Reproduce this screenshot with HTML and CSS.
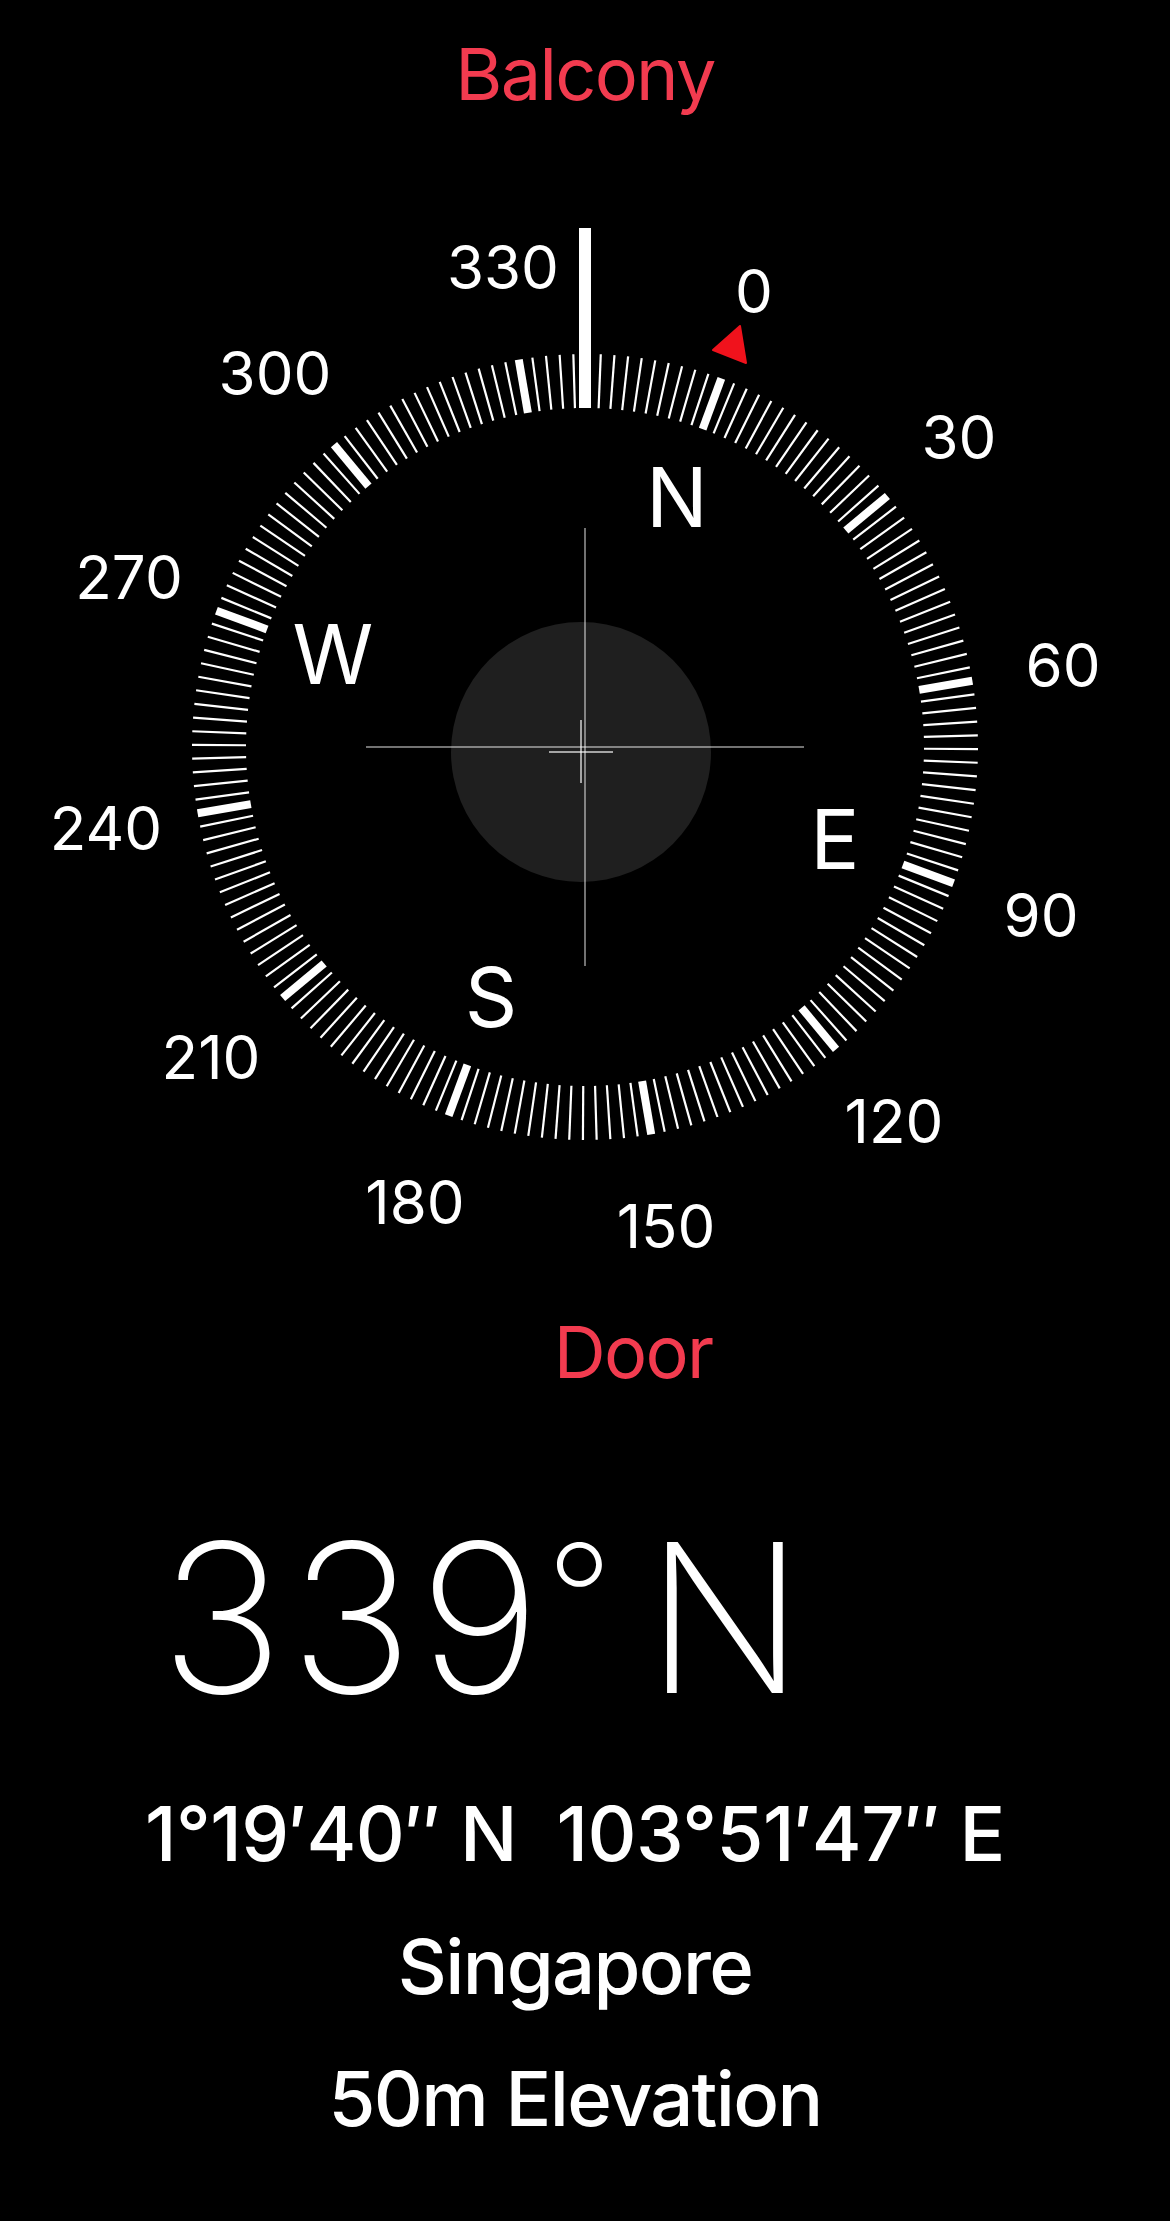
FILE: index.html
```html
<!DOCTYPE html>
<html lang="en">
  <head>
    <meta charset="UTF-8" />
    <meta name="viewport" content="width=device-width, initial-scale=1.0" />
    <title>Compass</title>
    <link rel="stylesheet" href="styles.css">
  </head>
  <body>
    <div class="target target-top">Balcony</div>
    <!-- viewBox uses page coordinates, dial centre is 585,747 -->
    <svg class="dial" viewBox="0 128 1170 1160" width="1170" height="1160">
      <circle class="disc" cx="581" cy="752" r="130" />
      <g id="ticks"></g>
      <rect class="pointer" x="579" y="228" width="12" height="180" />
      <path class="bearing" d="M740 326 L713 350 L746 363 Z" />
      <line class="cross" x1="585" y1="528" x2="585" y2="966" />
      <line class="cross" x1="366" y1="747" x2="804" y2="747" />
      <line class="cross cross-small" x1="581" y1="720" x2="581" y2="783" />
      <line class="cross cross-small" x1="549" y1="752" x2="613" y2="752" />
      <text class="deg" x="503" y="289">330</text>
      <text class="deg" x="754" y="313">0</text>
      <text class="deg" x="959" y="459">30</text>
      <text class="deg" x="1063" y="687">60</text>
      <text class="deg" x="1041" y="937">90</text>
      <text class="deg" x="894" y="1143">120</text>
      <text class="deg" x="666" y="1248">150</text>
      <text class="deg" x="415" y="1224">180</text>
      <text class="deg" x="211" y="1079">210</text>
      <text class="deg" x="106" y="850">240</text>
      <text class="deg" x="129" y="599">270</text>
      <text class="deg" x="275" y="395">300</text>
      <text class="card" x="677" y="527">N</text>
      <text class="card" x="835" y="869">E</text>
      <text class="card" x="491" y="1027">S</text>
      <text class="card" x="333" y="684">W</text>
    </svg>
    <div class="target target-door">Door</div>
    <div class="heading"><span class="heading-num">339</span><span class="heading-sign">°</span> N</div>
    <div class="info">
      <div class="info-coords">1°19′40″ N&nbsp; 103°51′47″ E</div>
      <div>Singapore</div>
      <div>50m Elevation</div>
    </div>
    <script src="script.js"></script>
  </body>
</html>
```

FILE: styles.css
```css
html,
body {
  margin: 0;
  background: #000;
}
body {
  width: 1170px;
  height: 2221px;
  overflow: hidden;
  color: #fff;
  font-family: Inter, "Liberation Sans", sans-serif;
}
.target {
  color: #f23b4f;
  font-size: 72px;
  letter-spacing: -1.7px;
  line-height: 88px;
  text-align: center;
}
.target-top {
  height: 88px;
  padding-top: 30px;
  padding-bottom: 10px;
}
.target-door {
  padding-left: 96px;
  margin-top: 20px;
}
.dial {
  display: block;
}
.disc {
  fill: #1f1f1f;
}
.tick {
  stroke: #fff;
  stroke-width: 2.2;
}
.tick-major {
  stroke-width: 8;
}
.pointer {
  fill: #fff;
}
.bearing {
  fill: #f0121c;
  stroke: #f0121c;
  stroke-width: 2;
  stroke-linejoin: round;
}
.cross {
  stroke: #fff;
  stroke-opacity: 0.6;
  stroke-width: 1.5;
}
.cross-small {
  stroke-width: 2;
}
.deg,
.card {
  fill: #fff;
  text-anchor: middle;
}
.deg {
  font-size: 60px;
}
.card {
  font-size: 82px;
}
.heading {
  padding-left: 160px;
  margin-top: 101px;
  font-size: 208px;
  font-weight: 250;
  line-height: 240px;
  word-spacing: -26px;
}
.heading-num {
  letter-spacing: 6px;
}
.heading-sign {
  font-size: 146px;
  line-height: 0;
  vertical-align: 44px;
}
.info {
  margin-top: 30px;
  padding-right: 20px;
  text-align: center;
  font-size: 76px;
  font-weight: 500;
  letter-spacing: -1.7px;
  line-height: 132.5px;
}
.info-coords {
  letter-spacing: -0.5px;
}
```

FILE: script.js
```js
const ticks = document.getElementById("ticks");
const rotation = 20.3;

for (let deg = 0; deg < 360; deg += 2) {
  const line = document.createElementNS("http://www.w3.org/2000/svg", "line");
  line.setAttribute("x1", 585);
  line.setAttribute("x2", 585);
  line.setAttribute("y1", 354);
  line.setAttribute("y2", 408);
  line.setAttribute("transform", `rotate(${deg + rotation} 585 747)`);
  line.setAttribute("class", deg % 30 === 0 ? "tick tick-major" : "tick");
  ticks.appendChild(line);
}
```
